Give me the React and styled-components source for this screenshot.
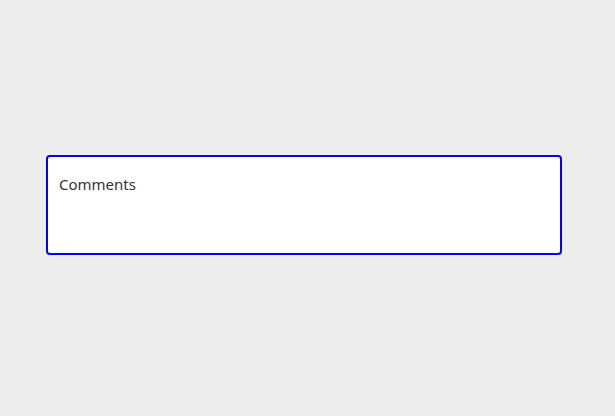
import React from "react";
import styled, { createGlobalStyle } from "styled-components";

const GlobalStyle = createGlobalStyle`
  html, body {
    margin: 0;
    padding: 0;
    background: #ededed;
  }
`;

const App = () => {
  return (
    <>
      <GlobalStyle />
      <Page>
        <CommentBox placeholder="Comments" />
      </Page>
    </>
  );
};

export default App;

const Page = styled.div`
  height: 416px;
  box-sizing: border-box;
  padding: 155px 0 0 46px;
`;

const CommentBox = styled.textarea`
  display: block;
  box-sizing: border-box;
  width: 516px;
  height: 100px;
  margin: 0;
  padding: 17px 11px;
  border: 2px solid #0000ff;
  border-radius: 4px;
  background: #ffffff;
  outline: none;
  resize: none;
  font-family: "Noto Sans", "Open Sans", sans-serif;
  font-size: 15px;
  line-height: 20px;
  color: #333333;
  &::placeholder {
    color: #333333;
    opacity: 1;
  }
`;
